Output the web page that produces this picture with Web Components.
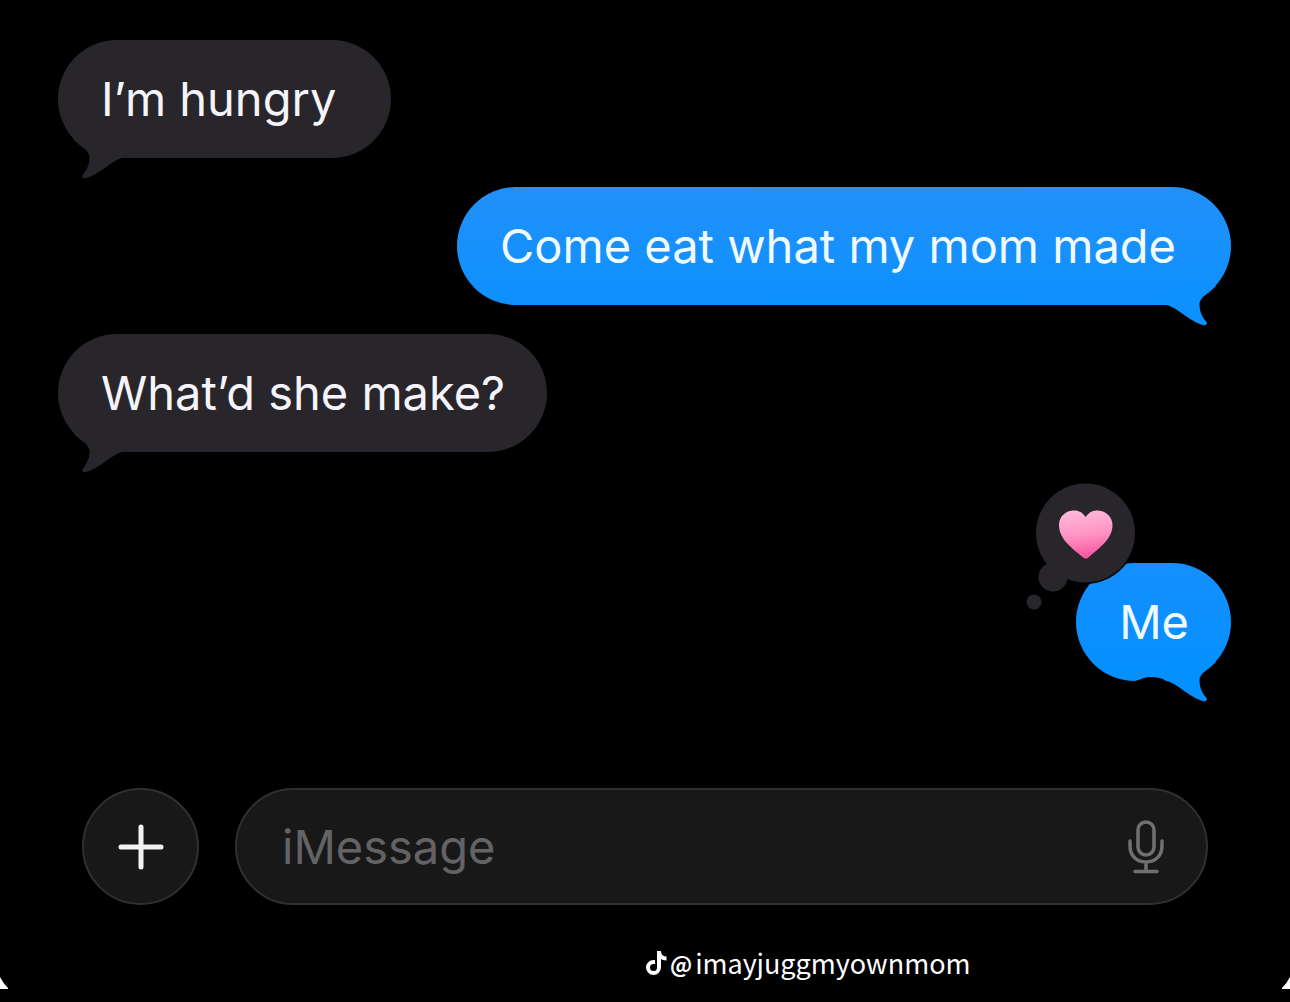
<!DOCTYPE html>
<html lang="en">
<head>
<meta charset="utf-8">
<meta name="viewport" content="width=device-width, initial-scale=1">
<title>iMessage</title>
<style>
  body {
    margin: 0;
    background: #000;
    font-family: Inter, "Liberation Sans", sans-serif;
  }
</style>
</head>
<body>

<chat-screen>
  <chat-bubble roomy>I’m hungry</chat-bubble>
  <chat-bubble outgoing roomy>Come eat what my mom made</chat-bubble>
  <chat-bubble>What’d she make?</chat-bubble>
  <chat-bubble outgoing short>Me<tap-back slot="reaction"></tap-back></chat-bubble>
  <chat-composer slot="composer"></chat-composer>
  <video-credit slot="credit">imayjuggmyownmom</video-credit>
</chat-screen>

<script>
(function ChatElements() {

class ChatScreen extends HTMLElement {
  constructor() {
    super();
    this.attachShadow({mode: 'open'});
    this.shadowRoot.innerHTML = `
      <style>
        :host {
          display: block;
          position: relative;
          min-height: 100vh;
          box-sizing: border-box;
          padding-top: 40px;
          background: #000;
          overflow: hidden;
        }
        .messages {
          display: flex;
          flex-direction: column;
          align-items: flex-start;
          gap: 29px;
          padding: 0 59px 107px 58px;
        }
        .corner {
          position: absolute;
          bottom: 13px;
          width: 8px;
          height: 12px;
          fill: #fff;
        }
        .left { left: 0; }
        .right { right: 0; transform: scaleX(-1); }
      </style>
      <main class="messages"><slot></slot></main>
      <slot name="composer"></slot>
      <slot name="credit"></slot>
      <svg class="corner left" viewBox="0 0 8 12" aria-hidden="true"><path d="M0 0Q3 6 8 11V12H0Z"/></svg>
      <svg class="corner right" viewBox="0 0 8 12" aria-hidden="true"><path d="M0 0Q3 6 8 11V12H0Z"/></svg>`;
  }
}

class ChatBubble extends HTMLElement {
  constructor() {
    super();
    this.attachShadow({mode: 'open'});
    this.shadowRoot.innerHTML = `
      <style>
        :host {
          --fill: #28262b;
          --tail: #28262b;
          display: block;
          position: relative;
          box-sizing: border-box;
          padding: 30px 42px 30px 43px;
          border-radius: 59px;
          background: var(--fill);
          color: #f6f4fb;
          font-size: 47px;
          line-height: 58px;
        }
        :host([roomy]) { padding-right: 55px; }
        :host([outgoing]) {
          --fill: linear-gradient(#2290f9, #0d91ff);
          --tail: #0d91ff;
          align-self: flex-end;
          color: #f0fbff;
        }
        :host([short]) {
          --fill: linear-gradient(#158fff, #0490ff);
          --tail: #0490ff;
          margin-top: 82px;
        }
        .tail {
          position: absolute;
          left: 0;
          bottom: -21px;
          width: 110px;
          height: 48px;
          fill: var(--tail);
        }
        :host([outgoing]) .tail {
          left: auto;
          right: 0;
          transform: scaleX(-1);
        }
        /* narrow bubbles are pinched where the tail meets the round side */
        .pinch { display: none; fill: #000; }
        :host([short]) .pinch { display: block; }
      </style>
      <svg class="tail" viewBox="0 0 110 48" aria-hidden="true">
        <path class="pinch" d="M58 30L66 26C73 23 79 22.500 85 23.500C91 25 95 27.500 102 28V30Z"/>
        <path d="M15 8L20 12.500C26 17.500 31.500 20 31.500 27C31.500 34 28 40 24.500 44C23 47 26 48 30 46.500C46 40 54 29 66 26.500L72 18L50 2Z"/>
      </svg>
      <slot></slot>
      <slot name="reaction"></slot>`;
  }
}

class TapBack extends HTMLElement {
  constructor() {
    super();
    this.attachShadow({mode: 'open'});
    this.shadowRoot.innerHTML = `
      <style>
        :host {
          position: absolute;
          left: -51px;
          top: -82px;
          width: 112px;
          height: 130px;
        }
        svg { display: block; }
      </style>
      <svg width="112" height="130" viewBox="0 0 112 130" role="img" aria-label="Pink heart">
        <defs>
          <linearGradient id="pink" x1="0.4" y1="0" x2="0.55" y2="1">
            <stop offset="0" stop-color="#ffb9da"/>
            <stop offset="0.5" stop-color="#ff94c4"/>
            <stop offset="1" stop-color="#f9509d"/>
          </linearGradient>
        </defs>
        <circle cx="60.500" cy="52" r="51" fill="#000"/>
        <g fill="#28262b">
          <circle cx="60.500" cy="52" r="49.500"/>
          <circle cx="28" cy="96" r="14.500"/>
          <circle cx="9" cy="121" r="7.500"/>
        </g>
        <path fill="url(#pink)" d="M60.500 36C64 31 68 29 73 29.500C81 30 87.500 36 87.500 44C87.500 58 74 67 64 76C62 78 59.500 78 57.500 76C47 67 34 58 34 44C34 36 40 30 48 29.500C53 29 57.500 31 60.500 36Z"/>
      </svg>`;
  }
}

class ChatComposer extends HTMLElement {
  constructor() {
    super();
    this.attachShadow({mode: 'open', delegatesFocus: true});
    this.shadowRoot.innerHTML = `
      <style>
        :host {
          display: flex;
          gap: 36px;
          padding: 0 82px;
        }
        button {
          display: flex;
          align-items: center;
          justify-content: center;
          padding: 0;
          border: 0;
          background: none;
          color: inherit;
        }
        .add, .field {
          box-sizing: border-box;
          height: 117px;
          border: 2px solid #303030;
          border-radius: 59px;
          background: #181818;
        }
        .add {
          flex: none;
          width: 117px;
        }
        .field {
          display: flex;
          flex: 1;
          align-items: center;
          min-width: 0;
          padding: 0 41px 0 45px;
        }
        input {
          flex: 1;
          min-width: 0;
          height: 64px;
          padding: 0;
          border: 0;
          outline: 0;
          background: none;
          color: #f6f4fb;
          font: 47px Inter, "Liberation Sans", sans-serif;
        }
        input::placeholder { color: #636365; opacity: 1; }
        svg { display: block; fill: none; stroke-linecap: round; }
      </style>
      <button class="add" type="button" aria-label="Add attachment">
        <svg width="46" height="46" viewBox="0 0 46 46" stroke="#f2f2f2" stroke-width="5"><path d="M23 3V43M3 23H43"/></svg>
      </button>
      <div class="field">
        <input type="text" placeholder="iMessage" aria-label="Message">
        <button type="button" aria-label="Dictate">
          <svg width="38" height="56" viewBox="0 0 38 56" stroke="#707070" stroke-width="3.500">
            <rect x="11" y="3" width="16" height="33" rx="8"/>
            <path d="M3 22V27C3 36 9 43 19 43S35 36 35 27V22M19 43V52.500M8 52.500H30"/>
          </svg>
        </button>
      </div>`;
  }
}

class VideoCredit extends HTMLElement {
  constructor() {
    super();
    this.attachShadow({mode: 'open'});
    this.shadowRoot.innerHTML = `
      <style>
        :host {
          display: flex;
          align-items: center;
          gap: 3px;
          margin: 38px 0 0 50%;
          color: #fff;
          font: 27px/40px "Noto Sans CJK SC", "Noto Sans", sans-serif;
        }
        svg { flex: none; }
        .at { font-size: 22px; font-weight: 700; }
      </style>
      <svg width="22" height="24" viewBox="0 0 22 24" fill="none" stroke="#fff" stroke-width="4" aria-hidden="true">
        <path d="M14 0V16.500A5.500 5.500 0 1 1 8.500 11H10M14 1C14.500 5 17 7.500 21.500 7.500"/>
      </svg>
      <span class="at">@</span><slot></slot>`;
  }
}

customElements.define('chat-screen', ChatScreen);
customElements.define('chat-bubble', ChatBubble);
customElements.define('tap-back', TapBack);
customElements.define('chat-composer', ChatComposer);
customElements.define('video-credit', VideoCredit);

})();
</script>
</body>
</html>
